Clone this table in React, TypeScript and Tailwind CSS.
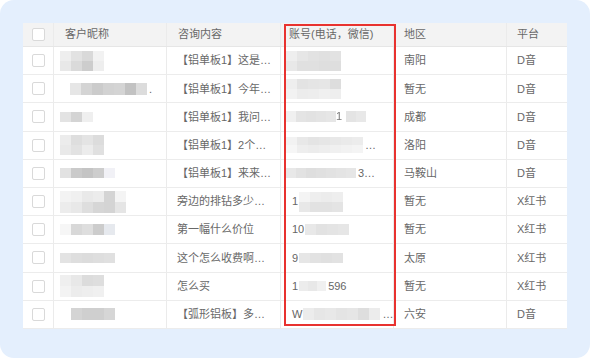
import React from "react";

type Mosaic = {
  ml: number;
  w: number;
  h: number;
  rows: string[][];
  pre?: string;
  mid?: { at: number; text: string };
  post?: string;
};

type Row = {
  nick: Mosaic;
  acct: Mosaic;
  content: string;
  region: string;
  platform: string;
};

const rows: Row[] = [
  {
    nick: { ml: 6, w: 11, h: 10, rows: [["#eeeeee", "#e2e2e2", "#d9d9d9", "#f2f2f2"], ["#e8e8e8", "#dadada", "#cdcdcd", "#eeeeee"]] },
    acct: { ml: 5, w: 11, h: 10, rows: [["#eeeeee", "#e6e6e6", "#e2e2e2", "#e0e0e0", "#e2e2e2"], ["#e8e8e8", "#e0e0e0", "#e0e0e0", "#dedede", "#dedede"]] },
    content: "【铝单板1】这是…",
    region: "南阳",
    platform: "D音",
  },
  {
    nick: { ml: 16, w: 11, h: 12, rows: [["#e6e6e6", "#d4d4d4", "#cbcbcb", "#d2d2d2", "#d4d4d4", "#c2c2c2", "#dcdcdc"]], post: "." },
    acct: { ml: 5, w: 11, h: 10, rows: [["#eeeeee", "#e3e3e3", "#e5e5e5", "#e6e6e6", "#dddddd"], ["#f2f2f2", "#ececec", "#ededed", "#f0f0f0", "#eeeeee"]] },
    content: "【铝单板1】今年…",
    region: "暂无",
    platform: "D音",
  },
  {
    nick: { ml: 6, w: 11, h: 10, rows: [["#e3e3e3", "#d4d4d4", "#efefef"]] },
    acct: { ml: 5, w: 10, h: 11, rows: [["#f0f0f0", "#e4e4e4", "#e2e2e2", "#e4e4e4", "#e6e6e6", "#e4e4e4", "#e8e8e8"]], mid: { at: 5, text: "1" } },
    content: "【铝单板1】我问…",
    region: "成都",
    platform: "D音",
  },
  {
    nick: { ml: 6, w: 11, h: 10, rows: [["#ececec", "#dedede", "#e4e4e4", "#dcdcdc"], ["#e9e9e9", "#e2e2e2", "#ececec", "#e0e0e0"]] },
    acct: { ml: 5, w: 11, h: 8, rows: [["#f2f2f2", "#e8e8e8", "#e4e4e4", "#e6e6e6", "#e8e8e8", "#eaeaea", "#ececec"], ["#f6f6f6", "#eeeeee", "#ececec", "#eeeeee", "#f0f0f0", "#f2f2f2", "#f4f4f4"]], post: "…" },
    content: "【铝单板1】2个…",
    region: "洛阳",
    platform: "D音",
  },
  {
    nick: { ml: 6, w: 11, h: 10, rows: [["#e2e2e2", "#cacaca", "#c4c4c4", "#cdcdcd", "#f1f1f6"]] },
    acct: { ml: 5, w: 10, h: 10, rows: [["#e8e8e8", "#e2e2e2", "#dedede", "#e0e0e0", "#e2e2e2", "#e4e4e4", "#e6e6e6"]], post: "3…" },
    content: "【铝单板1】来来…",
    region: "马鞍山",
    platform: "D音",
  },
  {
    nick: { ml: 6, w: 11, h: 11, rows: [["#f3f3f3", "#f0f0f0", "#e9e9e9", "#ececec", "#d4d4d4", "#f4f4f4"], ["#ececec", "#e8e8e8", "#dedede", "#d6d6d6", "#d4d4d4", "#e5e5e5"]] },
    acct: { ml: 11, w: 11, h: 10, pre: "1", rows: [["#f4f4f4", "#eeeeee", "#ececec", "#eeeeee"], ["#e8e8e8", "#e2e2e2", "#e2e2e2", "#e4e4e4"]] },
    content: "旁边的排钻多少…",
    region: "暂无",
    platform: "X红书",
  },
  {
    nick: { ml: 6, w: 11, h: 11, rows: [["#f6f6f6", "#d8d8d8", "#dedede", "#cccccc", "#e6e9ee"]] },
    acct: { ml: 11, w: 11, h: 11, pre: "10", rows: [["#e8e8e8", "#e2e2e2", "#e4e4e4", "#e6e6e6"]] },
    content: "第一幅什么价位",
    region: "暂无",
    platform: "X红书",
  },
  {
    nick: { ml: 6, w: 11, h: 10, rows: [["#e3e3e3", "#dedede", "#dcdcdc", "#dedede", "#e0e0e0"]] },
    acct: { ml: 11, w: 11, h: 10, pre: "9", rows: [["#e6e6e6", "#e2e2e2", "#e0e0e0", "#e2e2e2"]] },
    content: "这个怎么收费啊…",
    region: "太原",
    platform: "X红书",
  },
  {
    nick: { ml: 6, w: 11, h: 11, rows: [["#efefef", "#e8e8e8", "#dcdcdc", "#dedede"], ["#f3f3f3", "#ececec", "#eeeeee", "#f0f0f0"]] },
    acct: { ml: 11, w: 9, h: 10, pre: "1", rows: [["#ececec", "#e8e8e8", "#f0f0f0"]], post: "596" },
    content: "怎么买",
    region: "暂无",
    platform: "X红书",
  },
  {
    nick: { ml: 17, w: 11, h: 12, rows: [["#d4d4d4", "#cfcfcf", "#cfcfcf", "#d6d6d6"]] },
    acct: { ml: 11, w: 11, h: 12, pre: "W", rows: [["#ececec", "#e6e6e6", "#e8e8e8", "#e4e4e4", "#e6e6e6", "#dedede", "#ececec"]], post: "…" },
    content: "【弧形铝板】多…",
    region: "六安",
    platform: "D音",
  },
];

function Checkbox() {
  return <span className="block w-[13px] h-[13px] rounded-[2px] border border-[#d9d9d9] bg-white" />;
}

// Pixelated placeholder for masked values; optional visible characters around it.
function Blurred({ m }: { m: Mosaic }) {
  return (
    <div className="flex items-center" style={{ marginLeft: m.ml }}>
      {m.pre && <span className="text-[#666] mr-[1px]">{m.pre}</span>}
      <div className="flex flex-col blur-[0.6px]">
        {m.rows.map((r, i) => (
          <div key={i} className="flex">
            {r.map((c, j) => (
              <React.Fragment key={j}>
                {m.mid && m.mid.at === j && (
                  <span
                    className="flex items-center text-[#777] leading-none"
                    style={{ width: m.w, height: m.h }}
                  >
                    {i === 0 ? m.mid.text : ""}
                  </span>
                )}
                <span style={{ width: m.w, height: m.h, background: c }} />
              </React.Fragment>
            ))}
          </div>
        ))}
      </div>
      {m.post && <span className="shrink-0 leading-[16px] text-[#666] ml-[2px]">{m.post}</span>}
    </div>
  );
}

const cellBase = "flex items-center border-r border-[#ebebeb] overflow-hidden whitespace-nowrap";

export default function App() {
  return (
    <div
      className="w-[590px] h-[358px] bg-white"
      style={{ fontFamily: '"Liberation Sans", "Noto Sans CJK SC", sans-serif' }}
    >
      <div className="w-full h-full rounded-[14px] bg-[#e4effd] pt-[23px] pl-[23px]">
        <div className="relative w-[544px] bg-white text-[11px] text-[#686868]">
          {/* header */}
          <div className="flex h-[24px] bg-[#f3f3f3] border-b border-[#e6e6e6]">
            <div className={`${cellBase} w-[31px] justify-center`}>
              <Checkbox />
            </div>
            <div className={`${cellBase} w-[113px] pl-[11px]`}>客户昵称</div>
            <div className={`${cellBase} w-[114px] pl-[11px]`}>咨询内容</div>
            <div className={`${cellBase} w-[113px] pl-[8px]`}>账号(电话，微信)</div>
            <div className={`${cellBase} w-[113px] pl-[10px]`}>地区</div>
            <div className="flex items-center w-[60px] pl-[10px]">平台</div>
          </div>
          {/* body */}
          {rows.map((r, i) => (
            <div key={i} className="flex h-[28.2px] border-b border-[#ececec] last:border-b-0">
              <div className={`${cellBase} w-[31px] justify-center`}>
                <Checkbox />
              </div>
              <div className={`${cellBase} w-[113px]`}>
                <Blurred m={r.nick} />
              </div>
              <div className={`${cellBase} w-[114px] pl-[10px]`}>{r.content}</div>
              <div className={`${cellBase} w-[113px]`}>
                <Blurred m={r.acct} />
              </div>
              <div className={`${cellBase} w-[113px] pl-[10px]`}>{r.region}</div>
              <div className="flex items-center w-[60px] pl-[10px] whitespace-nowrap">{r.platform}</div>
            </div>
          ))}
          {/* highlight frame around the account column */}
          <div className="absolute left-[261px] top-[1px] w-[112px] h-[302px] border-2 border-[#e8322f] pointer-events-none" />
        </div>
      </div>
    </div>
  );
}
